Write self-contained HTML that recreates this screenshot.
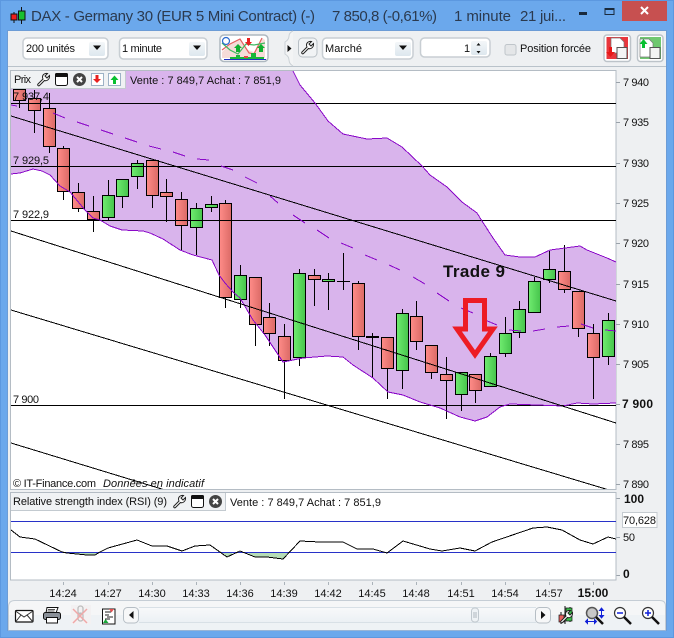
<!DOCTYPE html>
<html><head><meta charset="utf-8"><title>DAX</title>
<style>
html,body{margin:0;padding:0;background:#6BA8EC;width:674px;height:638px;overflow:hidden}
svg{display:block}
text{font-family:"Liberation Sans",Arial,sans-serif;font-size:11px;fill:#111}
</style></head><body>
<svg xmlns="http://www.w3.org/2000/svg" width="674" height="638" viewBox="0 0 674 638">
<defs>
<linearGradient id="r" x1="0" x2="1" y1="0" y2="0"><stop offset="0" stop-color="#FF8C88"/><stop offset="1" stop-color="#DB6A66"/></linearGradient>
<linearGradient id="g" x1="0" x2="1" y1="0" y2="0"><stop offset="0" stop-color="#70EC70"/><stop offset="1" stop-color="#46C44C"/></linearGradient>
<linearGradient id="btn" x1="0" x2="0" y1="0" y2="1"><stop offset="0" stop-color="#F4F7F9"/><stop offset="1" stop-color="#DDE7EE"/></linearGradient>
<linearGradient id="tb" x1="0" x2="0" y1="0" y2="1"><stop offset="0" stop-color="#F8F9FA"/><stop offset="1" stop-color="#EBF0F4"/></linearGradient>
<clipPath id="ch"><rect x="11" y="71" width="605" height="418"/></clipPath>
<g id="wr"><path d="M12.5 2.5 L10 5 L8 3 L10.5 .5 C8 0 5.5 1.5 5.5 4 C5.5 5 5.7 5.5 6 6 L1 11 C0 12 1.5 13.5 2.5 12.5 L7.5 7.5 C10 8.5 13 6 12.5 2.5Z" fill="#fff" stroke="#222" stroke-width="1"/></g>
<g id="wn"><rect x=".5" y=".5" width="12" height="12" rx="2" fill="#fff" stroke="#111"/><rect x="0" y="0" width="13" height="4" rx="1.5" fill="#111"/></g>
<g id="cl"><circle cx="6.5" cy="6.5" r="6.5" fill="#444"/><path d="M4 4L9 9M9 4L4 9" stroke="#fff" stroke-width="2"/></g>
</defs>

<!-- frame -->
<rect width="674" height="638" fill="#6BA8EC"/>
<rect x=".5" y=".5" width="673" height="637" fill="none" stroke="#5C98E0"/>
<rect x="8" y="31" width="658" height="599" fill="#EEF0F2"/>
<rect x="7.5" y="30.5" width="659" height="600" fill="none" stroke="#6C9CD6"/>

<!-- title -->
<path d="M14 12V23M21.5 7V24" stroke="#111"/>
<rect x="11" y="14" width="6" height="6" fill="#F01C1C" stroke="#111"/>
<rect x="18.5" y="11" width="6.500" height="9" fill="#18C030" stroke="#111"/>
<text x="31" y="21" textLength="284" lengthAdjust="spacing" style="font-size:15px;fill:#2B3A4F">DAX - Germany 30 (EUR 5 Mini Contract) (-)</text>
<text x="332" y="21" textLength="105" lengthAdjust="spacing" style="font-size:15px;fill:#2B3A4F">7 850,8 (-0,61%)</text>
<text x="454" y="21" textLength="57" lengthAdjust="spacing" style="font-size:15px;fill:#2B3A4F">1 minute</text>
<text x="520" y="21" textLength="46" lengthAdjust="spacing" style="font-size:15px;fill:#2B3A4F">21 jui...</text>
<rect x="579" y="12" width="8" height="3" fill="#1A2A3C"/>
<rect x="605" y="8.500" width="9" height="6" fill="none" stroke="#1A2A3C"/><rect x="605" y="8" width="9" height="2" fill="#1A2A3C"/>
<rect x="622" y="1" width="45" height="20" fill="#C75050"/>
<path d="M641 7L648 14M648 7L641 14" stroke="#fff" stroke-width="2"/>

<!-- toolbar -->
<rect x="8" y="66" width="658" height="1" fill="#B9C2CA"/>
<g fill="#fff" stroke="#C8CED3" stroke-width="1.500">
<rect x="23" y="38" width="85" height="21" rx="4"/>
<rect x="119.500" y="38" width="87.500" height="21" rx="4"/>
<rect x="322.500" y="38" width="90.500" height="21" rx="4"/>
<rect x="420.500" y="38" width="69.500" height="19" rx="4"/>
</g>
<rect x="89" y="42" width="16" height="14" rx="2" fill="url(#btn)"/>
<rect x="189" y="42" width="16" height="14" rx="2" fill="url(#btn)"/>
<rect x="395" y="42" width="16" height="14" rx="2" fill="url(#btn)"/>
<rect x="471" y="41" width="16" height="14" rx="2" fill="url(#btn)"/>
<path d="M93 45.500h8l-4 4.500zM193 45.500h8l-4 4.500zM399 45.500h8l-4 4.500z" fill="#111"/>
<path d="M476.500 45.500h4l-2-2.500zM476.500 51h4l-2 2.500z" fill="#111"/>
<text x="26" y="52" textLength="49" lengthAdjust="spacing">200 unités</text>
<text x="122" y="52" textLength="40" lengthAdjust="spacing">1 minute</text>
<text x="325" y="52" textLength="37" lengthAdjust="spacing">Marché</text>
<text x="464" y="52">1</text>
<rect x="505" y="44.500" width="11" height="10.500" rx="2" fill="#E4E6E8" stroke="#BFC5CA"/>
<text x="520" y="52" textLength="71" lengthAdjust="spacing">Position forcée</text>

<!-- strategy icon -->
<rect x="220" y="35" width="48" height="26.500" rx="4" fill="#fff" stroke="#AEB8C0" stroke-width="1.500"/>
<path d="M222 52L231 44L240 39L248 50L254 52L262 38L265 40V58H222Z" fill="#F6DCD8"/>
<path d="M222 50L230 44L240 39L249 53L254 54L262 38" fill="none" stroke="#E46060" stroke-width="1.200"/>
<path d="M222 43L230 50L238 54L246 44L254 45L265 43" fill="none" stroke="#40B860" stroke-width="1.200"/>
<circle cx="226" cy="41" r="3.500" fill="#fff" stroke="#2A6AD0" stroke-width="1.200"/>
<path d="M236 52v-4h-2l4-4 4 4h-2v4zM259 52v-4h-2l4-4 4 4h-2v4z" fill="#10B030"/>
<path d="M247 38h3v4h2l-3.500 4-3.500-4h2z" fill="#E82020"/>
<rect x="230" y="57" width="34" height="2" fill="#18B838"/><rect x="251" y="53" width="5" height="5" fill="#18B838"/><rect x="236" y="55" width="4" height="3" fill="#18B838"/><rect x="244" y="56" width="4" height="2" fill="#E04848"/>
<rect x="224" y="59" width="42" height="1" fill="#2030C0"/>

<!-- toolbar grip -->
<path d="M293 31C286 34 292 38 285 42V54C292 58 286 62 293 66" fill="#F3F4F5" stroke="#CBD1D6"/>
<path d="M287.500 45v7l4-3.500z" fill="#111"/>
<rect x="298.500" y="38" width="18.500" height="19" rx="4" fill="#F1F3F5" stroke="#B8BFC5"/>
<use href="#wr" x="301" y="41"/>

<!-- red / green doc buttons -->
<rect x="604" y="35" width="26.500" height="26.500" rx="3" fill="#fff" stroke="#BCC3C9" stroke-width="1.500"/>
<rect x="606.500" y="37" width="21.500" height="22" fill="#E8363C"/>
<path d="M611 38h9l4 4v11h-13z" fill="#fff" stroke="#777" stroke-width=".7"/>
<rect x="617" y="47.500" width="10" height="11" fill="#F4F4F4" stroke="#555"/>
<path d="M609 47h3v5h3l-4.500 5-4.500-5h3z" fill="#E81818"/>
<rect x="637.500" y="35" width="25.500" height="26.500" rx="3" fill="#fff" stroke="#BCC3C9" stroke-width="1.500"/>
<rect x="640" y="37" width="21" height="22" fill="#70C870"/>
<path d="M640 39h9l4 4v14h-13z" fill="#fff" stroke="#777" stroke-width=".7"/>
<rect x="650" y="47.500" width="10" height="11" fill="#F4F4F4" stroke="#555"/>
<path d="M642 48v-4h-2.500l4-5 4 5H645v4z" fill="#08C030"/>

<!-- chart -->
<rect x="10.500" y="70.500" width="605.500" height="419" fill="#fff" stroke="#B4BCC4"/>
<g clip-path="url(#ch)" shape-rendering="crispEdges">
<polygon fill="#D9B4EC" points="11,71 293,71 300,85 315,103 328,121 343,134 367,139 387,138 402,147 422,166 430,175 447,187 462,202 477,213 482,221 493,238 505,255 520,257 535,257 550,250 580,246 587,250 607,258 616,262 616,403 593,404 577,403 563,406 537,405 510,404 500,407 487,417 475,421 460,417 440,408 420,402 403,395 388,392 373,378 353,365 343,357 327,356 303,358 283,362 265,335 253,320 240,298 233,292 225,283 219,275 212,260 193,255 180,250 163,239 150,233 143,231 122,230 110,226 100,220 93,218 85,210 70,192 60,186 50,175 42,171 33,169 20,173 11,174"/>
<!-- wicks -->
<path stroke="#000" fill="none" d="M19.500 89V108M34.500 90V133M49.500 93V153M63.500 146V200M78.500 183V212M93.500 196V232M108.500 180V220M122.500 179V208M137.500 160V189M152.500 160V208M166.500 179V222M181.500 192V250M196.500 203V255M211.500 196V212M225.500 200V308M240.500 265V308M255.500 277V346M269.500 303V346M284.500 324V399M299.500 269V366M314.500 269V306M328.500 273V310M343.500 253V290M358.500 281V350M372.500 333V377M387.500 337V399M402.500 309V389M416.500 301V350M431.500 345V379M446.500 357V419M461.500 372V411M475.500 374V403M490.500 353V386M505.500 317V357M519.500 301V338M534.500 277V312M549.500 251V283M564.500 245V293M578.500 291V337M593.500 324V399M608.500 313V365"/>
<path stroke="#000" fill="none" d="M337 281.500H350"/>
<rect x="366" y="336" width="13" height="2" fill="#000"/>
<!-- red candles -->
<g fill="url(#r)" stroke="#000">
<rect x="13.500" y="89.500" width="12" height="11"/>
<rect x="28.500" y="98.500" width="12" height="12"/>
<rect x="43.500" y="108.500" width="12" height="38"/>
<rect x="57.500" y="148.500" width="12" height="43"/>
<rect x="72.500" y="192.500" width="12" height="16"/>
<rect x="87.500" y="211.500" width="12" height="8"/>
<rect x="146.500" y="160.500" width="12" height="35"/>
<rect x="160.500" y="192.500" width="12" height="4"/>
<rect x="175.500" y="199.500" width="12" height="26"/>
<rect x="219.500" y="203.500" width="12" height="94"/>
<rect x="249.500" y="277.500" width="12" height="47"/>
<rect x="263.500" y="317.500" width="12" height="16"/>
<rect x="278.500" y="336.500" width="12" height="24"/>
<rect x="308.500" y="275.500" width="12" height="4"/>
<rect x="352.500" y="283.500" width="12" height="53"/>
<rect x="381.500" y="337.500" width="12" height="31"/>
<rect x="410.500" y="316.500" width="12" height="25"/>
<rect x="425.500" y="345.500" width="12" height="27"/>
<rect x="440.500" y="374.500" width="12" height="6"/>
<rect x="469.500" y="374.500" width="12" height="16"/>
<rect x="558.500" y="271.500" width="12" height="18"/>
<rect x="572.500" y="291.500" width="12" height="37"/>
<rect x="587.500" y="333.500" width="12" height="24"/>
</g>
<!-- green candles -->
<g fill="url(#g)" stroke="#000">
<rect x="102.500" y="195.500" width="12" height="22"/>
<rect x="116.500" y="179.500" width="12" height="17"/>
<rect x="131.500" y="163.500" width="12" height="13"/>
<rect x="190.500" y="208.500" width="12" height="19"/>
<rect x="205.500" y="204.500" width="12" height="3"/>
<rect x="234.500" y="275.500" width="12" height="24"/>
<rect x="293.500" y="273.500" width="12" height="84"/>
<rect x="322.500" y="279.500" width="12" height="2"/>
<rect x="396.500" y="313.500" width="12" height="57"/>
<rect x="455.500" y="372.500" width="12" height="22"/>
<rect x="484.500" y="356.500" width="12" height="30"/>
<rect x="499.500" y="333.500" width="12" height="20"/>
<rect x="513.500" y="309.500" width="12" height="23"/>
<rect x="528.500" y="281.500" width="12" height="31"/>
<rect x="543.500" y="269.500" width="12" height="10"/>
<rect x="602.500" y="320.500" width="12" height="36"/>
</g>
<!-- horizontals -->
<path stroke="#000" d="M11 103.500H616M11 166.500H616M11 220.500H616M11 405.500H616"/>
<!-- band outline -->
<polyline fill="none" stroke="#8A08C8" points="293,71 300,85 315,103 328,121 343,134 367,139 387,138 402,147 422,166 430,175 447,187 462,202 477,213 482,221 493,238 505,255 520,257 535,257 550,250 580,246 587,250 607,258 616,262"/>
<polyline fill="none" stroke="#8A08C8" points="11,174 20,173 33,169 42,171 50,175 60,186 70,192 85,210 93,218 100,220 110,226 122,230 143,231 150,233 163,239 180,250 193,255 212,260 219,275 225,283 233,292 240,298 253,320 265,335 283,362 303,358 327,356 343,357 353,365 373,378 388,392 403,395 420,402 440,408 460,417 475,421 487,417 500,407 510,404 537,405 563,406 577,403 593,404 616,403"/>
<!-- dashes -->
<path fill="none" stroke="#8A08C8" d="M11 105L17 106M53 113L65 118M77 122L89 126M101 130L113 134M125 138L137 142M149 146L161 149M173 152L185 156M197 159L209 160M221 166L233 170M245 177L257 183M270 196L278 203M293 215L305 223M317 230L329 238M341 243L353 248M365 255L377 260M389 265L400 270M413 277L425 284M437 293L449 301M461 308L473 313M485 320L497 325M509 330L521 331M533 331L545 329M557 327L569 326M581 324L593 328M605 330L616 331"/>
<!-- diagonals -->
<path stroke="#000" fill="none" d="M11 116L616 301M11 231L616 423M11 310L609 490M11 443L165 490"/>
</g>

<!-- chart labels -->
<text x="13" y="100" textLength="36" lengthAdjust="spacing">7 937,4</text>
<text x="13" y="164" textLength="36" lengthAdjust="spacing">7 929,5</text>
<text x="13" y="218" textLength="36" lengthAdjust="spacing">7 922,9</text>
<text x="13" y="403" textLength="26" lengthAdjust="spacing">7 900</text>
<text x="13" y="487" textLength="83" lengthAdjust="spacing">© IT-Finance.com</text>
<text x="103" y="487" textLength="101" lengthAdjust="spacing" style="font-style:italic">Données en indicatif</text>

<!-- Prix header -->
<rect x="11" y="71" width="114" height="17" fill="#F0F2F4"/>
<path d="M11 88.500H125.500V71" fill="none" stroke="#C3CAD0"/>
<text x="14" y="83" textLength="17" lengthAdjust="spacing">Prix</text>
<use href="#wr" x="37" y="73"/>
<use href="#wn" x="55" y="73"/>
<use href="#cl" x="73" y="73"/>
<rect x="91.500" y="73.500" width="12" height="12" fill="#fff" stroke="#9DB2C6"/>
<path d="M95.500 75h3v4h2.500l-4 4-4-4h2.500z" fill="#E82020"/>
<rect x="108.500" y="73.500" width="12" height="12" fill="#fff" stroke="#9DB2C6"/>
<path d="M113 84v-4h-2.500l4-4.500 4 4.500H116v4z" fill="#08C030"/>
<text x="130" y="84" textLength="151" lengthAdjust="spacing">Vente : 7 849,7 Achat : 7 851,9</text>

<!-- Trade 9 + arrow -->
<text x="443" y="277" textLength="62" lengthAdjust="spacing" style="font-size:17px;font-weight:bold;fill:#111">Trade 9</text>
<path d="M465.500 300.500H484.500V329H493L475 354.500L457 329H465.500Z" fill="none" stroke="#ED1C24" stroke-width="5"/>

<!-- right axis -->
<path stroke="#9AA2AA" shape-rendering="crispEdges" d="M616 82.500h4M616 122.500h4M616 163.500h4M616 203.500h4M616 243.500h4M616 284.500h4M616 324.500h4M616 364.500h4M616 404.500h4M616 444.500h4M616 484.500h4M616 498.500h4M616 537.500h4M616 575.500h4"/>
<g>
<text x="623" y="86" textLength="26" lengthAdjust="spacing">7 940</text>
<text x="623" y="126" textLength="26" lengthAdjust="spacing">7 935</text>
<text x="623" y="167" textLength="26" lengthAdjust="spacing">7 930</text>
<text x="623" y="207" textLength="26" lengthAdjust="spacing">7 925</text>
<text x="623" y="247" textLength="26" lengthAdjust="spacing">7 920</text>
<text x="623" y="288" textLength="26" lengthAdjust="spacing">7 915</text>
<text x="623" y="328" textLength="26" lengthAdjust="spacing">7 910</text>
<text x="623" y="368" textLength="26" lengthAdjust="spacing">7 905</text>
<text x="622" y="408" textLength="31" lengthAdjust="spacing" style="font-weight:bold;font-size:12px">7 900</text>
<text x="623" y="448" textLength="26" lengthAdjust="spacing">7 895</text>
<text x="623" y="488" textLength="26" lengthAdjust="spacing">7 890</text>
</g>

<!-- RSI panel -->
<rect x="10.500" y="492.500" width="605.500" height="87.500" fill="#fff" stroke="#B4BCC4"/>
<g shape-rendering="crispEdges">
<polygon fill="#B6DDB6" points="62,552 67,553 87,555 95,555 100,552"/>
<polygon fill="#B6DDB6" points="222,552 227,557 235,552"/>
<polygon fill="#B6DDB6" points="245,552 255,557 267,557 283,559 290,552"/>
<path stroke="#2832C8" d="M11 521.500H616M11 552.500H616"/>
<polyline fill="none" stroke="#000" points="11,530 20,537 35,539 62,552 67,553 87,555 95,555 100,552 108,548 137,540 152,546 167,546 182,551 195,546 210,545 227,557 240,551 255,557 267,557 283,559 300,541 320,542 343,542 357,549 373,549 387,553 403,541 430,549 442,551 460,548 475,551 492,542 533,528 547,527 562,530 580,540 593,544 608,537 616,539"/>
</g>
<rect x="11" y="493" width="214" height="17" fill="#F0F2F4"/>
<path d="M11 510.500H225.500V493" fill="none" stroke="#C3CAD0"/>
<text x="13" y="505" textLength="154" lengthAdjust="spacing">Relative strength index (RSI) (9)</text>
<use href="#wr" x="173" y="495"/>
<use href="#wn" x="191" y="495"/>
<use href="#cl" x="209" y="495"/>
<text x="230" y="506" textLength="151" lengthAdjust="spacing">Vente : 7 849,7 Achat : 7 851,9</text>
<text x="624" y="503" style="font-weight:bold;font-size:12px" textLength="20" lengthAdjust="spacing">100</text>
<rect x="622.500" y="512.500" width="34.500" height="15" fill="#fff" stroke="#C5CBD0"/>
<text x="623" y="524" textLength="33" lengthAdjust="spacing">70,628</text>
<text x="623" y="541" textLength="12" lengthAdjust="spacing">50</text>
<text x="623" y="578" style="font-weight:bold;font-size:12px">0</text>

<!-- time axis -->
<path stroke="#AAB2B9" shape-rendering="crispEdges" d="M63.500 582v3M108.500 582v3M152.500 582v3M196.500 582v3M240.500 582v3M284.500 582v3M328.500 582v3M372.500 582v3M416.500 582v3M461.500 582v3M505.500 582v3M549.500 582v3M593.500 582v3"/>
<g text-anchor="middle">
<text x="63" y="597">14:24</text><text x="108" y="597">14:27</text><text x="152" y="597">14:30</text><text x="196" y="597">14:33</text><text x="240" y="597">14:36</text><text x="284" y="597">14:39</text><text x="328" y="597">14:42</text><text x="372" y="597">14:45</text><text x="416" y="597">14:48</text><text x="461" y="597">14:51</text><text x="505" y="597">14:54</text><text x="549" y="597">14:57</text>
<text x="593" y="597" style="font-weight:bold;font-size:12px">15:00</text>
</g>

<!-- bottom toolbar -->
<path d="M8.500 630V607Q8.500 600.500 15 600.500H660Q665.500 600.500 665.500 606V630Z" fill="#F5F6F7" stroke="#C5CDD5"/>
<rect x="9" y="615" width="656" height="15" fill="#EEF2F5"/>
<rect x="139" y="607.500" width="397" height="15" fill="url(#tb)"/>
<path d="M139 607.500H536M139 622.500H536" stroke="#D8E0E6"/>
<rect x="123.500" y="607.500" width="15" height="15.500" rx="4" fill="#F6F7F8" stroke="#B6BEC5"/>
<path d="M133.500 611v8l-4.500-4z" fill="#111"/>
<rect x="535.500" y="607.500" width="15" height="15.500" rx="4" fill="#F6F7F8" stroke="#B6BEC5"/>
<path d="M541 611v8l4.500-4z" fill="#111"/>
<rect x="471.500" y="608" width="7" height="14" rx="3" fill="#EEF2F5" stroke="#C0C8CE"/>
<path d="M473 613h4M473 615h4M473 617h4" stroke="#B0B8BE"/>

<!-- envelope -->
<rect x="15.500" y="610.500" width="17.500" height="11.500" rx="1" fill="#fff" stroke="#111" stroke-width="1.200"/>
<path d="M15.500 611L24 617L33 611M15.500 622L21 615M33 622L27 615" fill="none" stroke="#333"/>
<!-- printer -->
<path d="M47 607.500H58L56 613H46Z" fill="#fff" stroke="#111"/>
<rect x="43.500" y="612.500" width="17" height="7" rx="2" fill="#8A9098" stroke="#111"/>
<rect x="46.500" y="617.500" width="11" height="5.500" fill="#fff" stroke="#111"/>
<path d="M48 609.500h7M47.500 611h7" stroke="#555"/>
<!-- crossed link -->
<rect x="71" y="605" width="20" height="19" fill="#F3F1F2"/>
<rect x="78" y="606" width="5" height="8" rx="2.500" fill="none" stroke="#BDBDBD" stroke-width="1.300"/>
<rect x="78" y="613" width="5" height="8" rx="2.500" fill="none" stroke="#BDBDBD" stroke-width="1.300"/>
<path d="M73 609L87 623M87 609L73 623" stroke="#F0A8A8" stroke-width="1.500"/>
<!-- note -->
<rect x="102.500" y="609" width="12.500" height="15" fill="#fff" stroke="#111"/>
<path d="M105 612h6M105 615h4M107 617h6M105 619h5" stroke="#222"/>
<path d="M109 609h5l-2.500 3.500z" fill="#E05050"/><path d="M103 623l2.500-4 3 4z" fill="#18A838"/>

<!-- wrench candle -->
<path d="M565 606V624M570 607V622M561 612V624" stroke="#111"/>
<rect x="566" y="608" width="6" height="13" fill="#3CC04A" stroke="#111" stroke-width=".7"/>
<rect x="559" y="615" width="5" height="7" fill="#E86060" stroke="#111" stroke-width=".7"/>
<use href="#wr" x="560" y="610"/>
<!-- zoom fit -->
<circle cx="592" cy="613" r="5.500" fill="#C8C8C8" stroke="#555" stroke-width="1.500"/>
<path d="M596 617L603 624" stroke="#111" stroke-width="2.500"/>
<path d="M601.500 610v6M599.500 610.500l2-2.500 2 2.500zM599.500 615.500l2 2.500 2-2.500z" stroke="#1020D8" fill="#1020D8"/>
<path d="M587 621.500h8M587.500 619.500l-2 2 2 2zM594.500 619.500l2 2-2 2z" stroke="#1020D8" fill="#1020D8"/>
<!-- zoom - -->
<circle cx="620" cy="613" r="5.500" fill="#fff" stroke="#333" stroke-width="1.200"/>
<path d="M617 613h6" stroke="#1020D8" stroke-width="1.500"/>
<path d="M624 617L631 624" stroke="#111" stroke-width="2.500"/>
<!-- zoom + -->
<circle cx="648" cy="613" r="5.500" fill="#fff" stroke="#333" stroke-width="1.200"/>
<path d="M645 613h6M648 610v6" stroke="#1020D8" stroke-width="1.500"/>
<path d="M652 617L659 624" stroke="#111" stroke-width="2.500"/>
</svg>
</body></html>
